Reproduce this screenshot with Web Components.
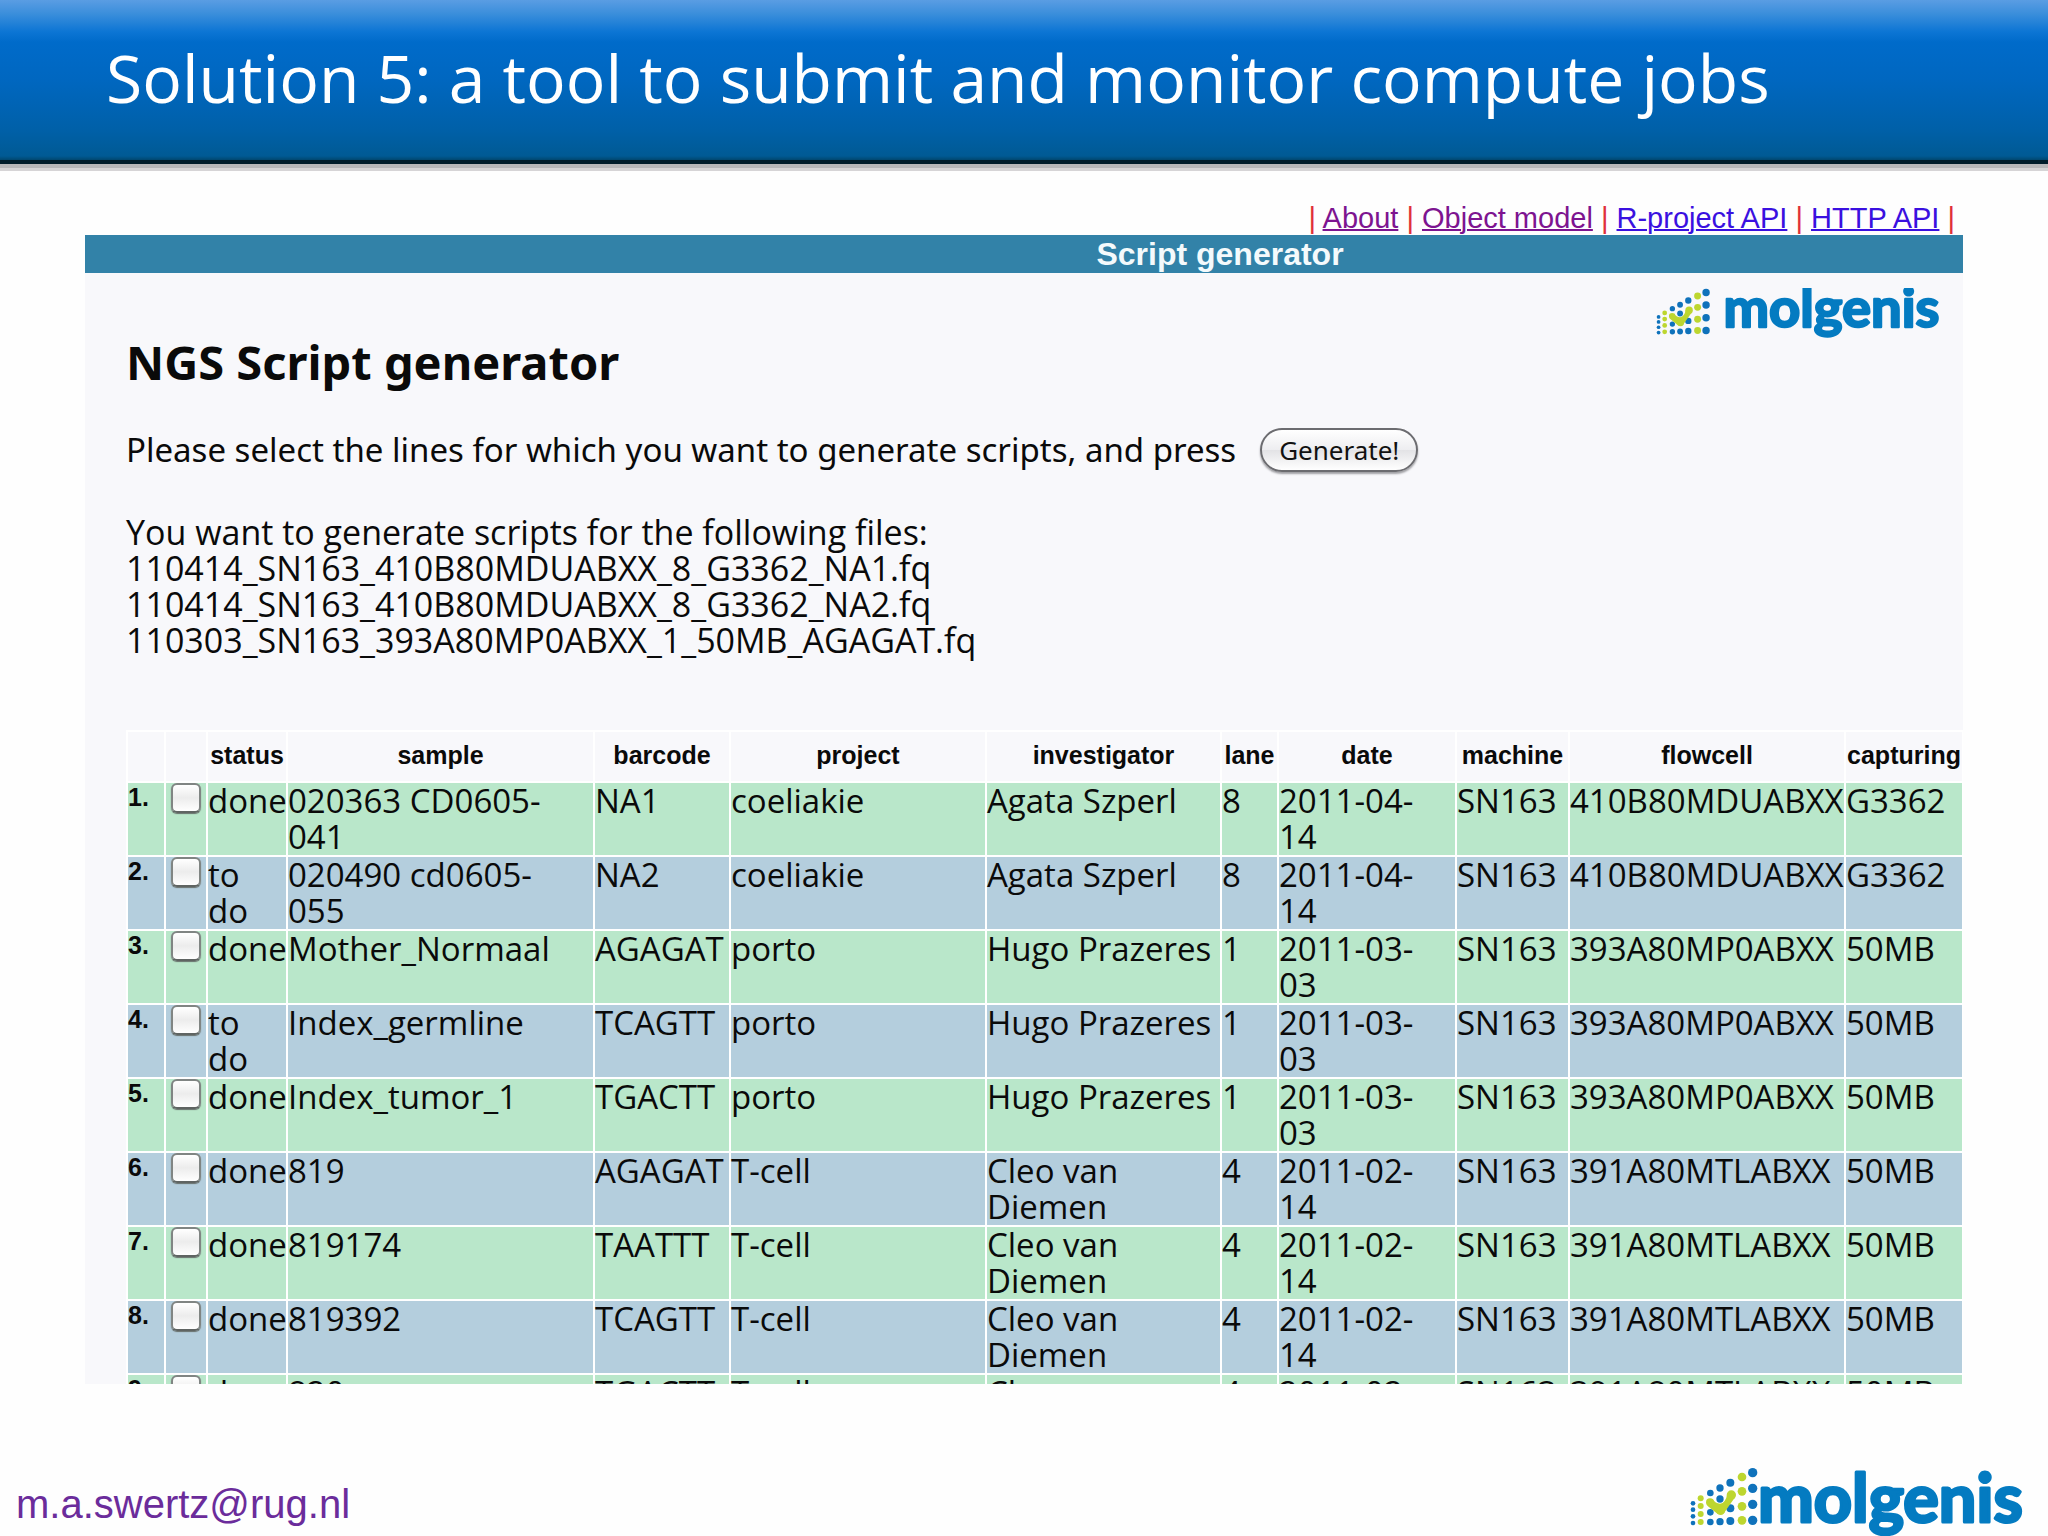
<!DOCTYPE html>
<html lang="en">
<head>
<meta charset="utf-8">
<title>Script generator</title>
<style>
    body {
        margin: 0;
        min-height: 100vh;
        display: flex;
        flex-direction: column;
        background: #fefefe;
        color: #0a0a0a;
        font-family: "Noto Sans", "Open Sans", sans-serif;
        overflow: hidden;
    }
</style>
</head>
<body>
    <slide-header>Solution 5: a tool to submit and monitor compute jobs</slide-header>
    <script-generator></script-generator>
    <slide-footer></slide-footer>

<script>
class SlideHeader extends HTMLElement {
    connectedCallback() {
        this.attachShadow({ mode: 'open' });
        this.shadowRoot.innerHTML = `
            <style>
                :host {
                    display: block;
                    padding: 33px 106px 39px;
                    background: linear-gradient(#5a9de3 0, #3a8edb 14px, #0c75d4 32px, #006bca 42px, #0067c0 80px, #0060a8 130px, #005a94 156px, #00476f 160px);
                    border-bottom: 4px solid #011c2a;
                    box-shadow: 0 4px #b8b7b9, 0 7px #d6d4d6;
                }
                h1 {
                    margin: 0;
                    color: #fff;
                    font: 400 66px/88px "Open Sans", "Noto Sans", sans-serif;
                    white-space: nowrap;
                }
            </style>
            <h1><slot></slot></h1>
        `;
    }
}

class MolgenisLogo extends HTMLElement {
    connectedCallback() {
        // the large logo has the name right against the dots
        const large = this.hasAttribute('large');
        const width = large ? 333 : 284;
        const height = large ? 69 : 52;
        const viewBox = large ? '90 50 999 207' : '90 50 1069 196';
        const dots = [
            [99, 7, '159 178 198 218', 'b'],
            [122, 9, '144 167 191 215', 'g'],
            [151, 10, '128 186 215', 'b'],
            [180, 11, '113 214', 'b'],
            [211, 12, '97 174 212', 'b'],
            [246, 13, '80 123 168 210', 'g'],
            [278, 14, '67 114 162 210', 'b']
        ];
        const circles = dots.map(([x, r, ys, cls]) =>
            ys.split(' ').map(y => `<circle class="${cls}" cx="${x}" cy="${y}" r="${r}"/>`).join('')
        ).join('');

        this.attachShadow({ mode: 'open' });
        this.shadowRoot.innerHTML = `
            <style>
                :host { display: block; }
                svg { display: block; }
                .b { fill: #0f72bb; }
                .g { fill: #bdd62f; }
                text {
                    font-family: Lato, sans-serif;
                    font-weight: 700;
                    fill: #047bc1;
                    stroke: #047bc1;
                    stroke-width: 9;
                    stroke-linejoin: round;
                }
            </style>
            <svg width="${width}" height="${height}" viewBox="${viewBox}">
                ${circles}
                <path d="M142 166 L174 192 L192 188 L224 142 L202 130 Q197 158 180 160 Q166 160 158 146Z" fill="#bdd62f"/>
                <circle class="g" cx="150" cy="156" r="12"/>
                <circle class="g" cx="182" cy="181" r="13"/>
                <circle class="g" cx="214" cy="134" r="14"/>
                <circle class="b" cx="180" cy="146" r="11"/>
                <text x="${large ? 294 : 344}" y="${large ? 214 : 197}" font-size="${large ? 200 : 205}">molgenis</text>
            </svg>
        `;
    }
}

class JobTable extends HTMLElement {
    connectedCallback() {
        const widths = [38, 42, 80, 307, 136, 256, 235, 57, 178, 113, 276, 118];
        const heads = ['', '', 'status', 'sample', 'barcode', 'project', 'investigator', 'lane', 'date', 'machine', 'flowcell', 'capturing'];
        const jobs = [
            ['done', '020363 CD0605-041', 'NA1', 'coeliakie', 'Agata Szperl', '8', '2011-04-14', 'SN163', '410B80MDUABXX', 'G3362'],
            ['to do', '020490 cd0605-055', 'NA2', 'coeliakie', 'Agata Szperl', '8', '2011-04-14', 'SN163', '410B80MDUABXX', 'G3362'],
            ['done', 'Mother_Normaal', 'AGAGAT', 'porto', 'Hugo Prazeres', '1', '2011-03-03', 'SN163', '393A80MP0ABXX', '50MB'],
            ['to do', 'Index_germline', 'TCAGTT', 'porto', 'Hugo Prazeres', '1', '2011-03-03', 'SN163', '393A80MP0ABXX', '50MB'],
            ['done', 'Index_tumor_1', 'TGACTT', 'porto', 'Hugo Prazeres', '1', '2011-03-03', 'SN163', '393A80MP0ABXX', '50MB'],
            ['done', '819', 'AGAGAT', 'T-cell', 'Cleo van Diemen', '4', '2011-02-14', 'SN163', '391A80MTLABXX', '50MB'],
            ['done', '819174', 'TAATTT', 'T-cell', 'Cleo van Diemen', '4', '2011-02-14', 'SN163', '391A80MTLABXX', '50MB'],
            ['done', '819392', 'TCAGTT', 'T-cell', 'Cleo van Diemen', '4', '2011-02-14', 'SN163', '391A80MTLABXX', '50MB'],
            ['done', '820', 'TGACTT', 'T-cell', 'Cleo van Diemen', '4', '2011-02-14', 'SN163', '391A80MTLABXX', '50MB']
        ];
        // codes and dates go on to a second line before their last number
        const cell = text => `<td>${text.replace(/-(\d+)$/, '-<br>$1')}</td>`;

        this.attachShadow({ mode: 'open' });
        this.shadowRoot.innerHTML = `
            <style>
                :host {
                    display: block;
                    height: 654px;
                    overflow: hidden;
                }
                table {
                    width: 100%;
                    table-layout: fixed;
                    border-collapse: collapse;
                    font: 33px/36px "Open Sans", "Noto Sans", sans-serif;
                }
                th, td {
                    padding: 0;
                    border: 2px solid #fff;
                    text-align: left;
                    vertical-align: top;
                }
                th {
                    font: bold 25px/28px "Liberation Sans", Arial, sans-serif;
                }
                thead th {
                    padding: 9px 0 12px;
                    text-align: center;
                    white-space: nowrap;
                }
                tbody tr:nth-child(odd) { background: #b9e7ca; }
                tbody tr:nth-child(even) { background: #b4cedd; }
                input {
                    appearance: none;
                    display: block;
                    width: 30px;
                    height: 30px;
                    margin: 0 auto;
                    border: 2px solid #808583;
                    border-bottom-color: #5f6462;
                    border-radius: 6px;
                    background: linear-gradient(#fff, #ececec 50%, #fff);
                    box-shadow: 0 1px 1px #68706c;
                }
            </style>
            <table>
                <colgroup>${widths.map(w => `<col style="width: ${w}px">`).join('')}</colgroup>
                <thead>
                    <tr>${heads.map(h => h ? `<th scope="col">${h}</th>` : '<td></td>').join('')}</tr>
                </thead>
                <tbody>
                    ${jobs.map((job, i) => `
                        <tr>
                            <th scope="row">${i + 1}.</th>
                            <td><input type="checkbox" aria-label="Select line ${i + 1}"></td>
                            ${job.map(cell).join('')}
                        </tr>
                    `).join('')}
                </tbody>
            </table>
        `;
    }
}

class ScriptGenerator extends HTMLElement {
    connectedCallback() {
        this.attachShadow({ mode: 'open' });
        this.shadowRoot.innerHTML = `
            <style>
                :host {
                    display: block;
                    margin: 37px 85px 0;
                }
                nav {
                    padding-right: 8px;
                    color: #e0303a;
                    font: 29px/34px "Liberation Sans", Arial, sans-serif;
                    text-align: right;
                }
                a {
                    color: #3a10e0;
                    text-decoration-thickness: 2px;
                }
                a.visited { color: #7d1490; }
                h2 {
                    margin: 0;
                    padding-left: 392px;
                    background: #3282a8;
                    color: #f4fafc;
                    font: bold 32px/38px "Liberation Sans", Arial, sans-serif;
                    text-align: center;
                }
                .panel {
                    padding: 15px 0 0 41px;
                    background: #f8f8fb;
                }
                .top {
                    display: flex;
                    justify-content: space-between;
                    padding-right: 23px;
                }
                h3 {
                    margin: 50px 0 0;
                    font-size: 47px;
                    line-height: 48px;
                }
                p {
                    margin: 40px 0 0;
                    font-size: 33px;
                    line-height: 48px;
                }
                .intro {
                    display: flex;
                    align-items: center;
                    gap: 24px;
                }
                button {
                    padding: 0 17px;
                    border: 2px solid #6c6c70;
                    border-radius: 22px;
                    background: linear-gradient(#fff, #ededf0 50%, #e3e3e6 51%, #fff);
                    box-shadow: 0 2px 2px #a0a0a4;
                    color: #111;
                    font: 26px/40px "Noto Sans", "Open Sans", sans-serif;
                }
                .files {
                    margin: 40px 0 72px;
                    font: 34px/36px "Open Sans", "Noto Sans", sans-serif;
                }
                ul {
                    margin: 0;
                    padding: 0;
                    list-style: none;
                }
            </style>
            <nav>
                | <a class="visited" href="#about">About</a>
                | <a class="visited" href="#model">Object model</a>
                | <a href="#r-api">R-project API</a>
                | <a href="#http-api">HTTP API</a> |
            </nav>
            <h2>Script generator</h2>
            <div class="panel">
                <div class="top">
                    <h3>NGS Script generator</h3>
                    <molgenis-logo></molgenis-logo>
                </div>
                <p class="intro">
                    Please select the lines for which you want to generate scripts, and press
                    <button type="button">Generate!</button>
                </p>
                <div class="files">
                    You want to generate scripts for the following files:
                    <ul>
                        <li>110414_SN163_410B80MDUABXX_8_G3362_NA1.fq</li>
                        <li>110414_SN163_410B80MDUABXX_8_G3362_NA2.fq</li>
                        <li>110303_SN163_393A80MP0ABXX_1_50MB_AGAGAT.fq</li>
                    </ul>
                </div>
                <job-table></job-table>
            </div>
        `;
    }
}

class SlideFooter extends HTMLElement {
    connectedCallback() {
        this.attachShadow({ mode: 'open' });
        this.shadowRoot.innerHTML = `
            <style>
                :host {
                    display: flex;
                    align-items: flex-end;
                    justify-content: space-between;
                    margin-top: auto;
                    padding: 0 25px 0 16px;
                }
                a {
                    padding-bottom: 8px;
                    color: #6b2c9b;
                    font: 40px/48px "Liberation Sans", Arial, sans-serif;
                    text-decoration: none;
                }
            </style>
            <a href="mailto:m.a.swertz@rug.nl">m.a.swertz@rug.nl</a>
            <molgenis-logo large></molgenis-logo>
        `;
    }
}

customElements.define('slide-header', SlideHeader);
customElements.define('molgenis-logo', MolgenisLogo);
customElements.define('job-table', JobTable);
customElements.define('script-generator', ScriptGenerator);
customElements.define('slide-footer', SlideFooter);
</script>
</body>
</html>
